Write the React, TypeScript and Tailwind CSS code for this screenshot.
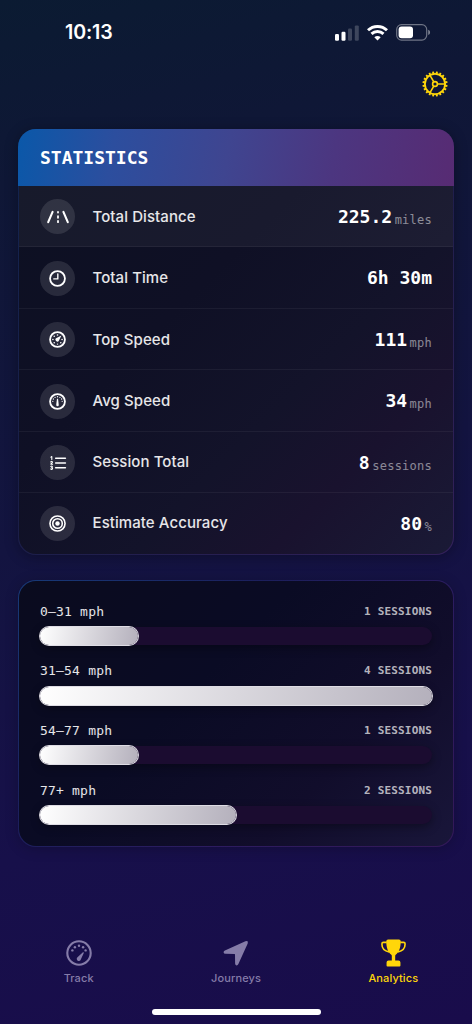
import type { ReactNode } from "react";

const MONO = "font-['DejaVu_Sans_Mono',monospace]";

const GEAR_TEETH = Array.from({ length: 20 }, (_, i) => i * 18);

function GearIcon() {
  return (
    <svg width="26" height="26" viewBox="0 0 26 26" fill="none" stroke="#ffd60a">
      {GEAR_TEETH.map((angle) => (
        <path
          key={angle}
          d="M13 2.8V0.5"
          strokeWidth="1.9"
          transform={`rotate(${angle + 9} 13 13)`}
        />
      ))}
      <circle cx="13" cy="13" r="10.1" strokeWidth="1.8" />
      <circle cx="13" cy="13" r="2.4" strokeWidth="1.6" />
      <path d="M15.4 13H23M11.8 10.9 8 4.4M11.8 15.1 8 21.6" strokeWidth="1.6" />
    </svg>
  );
}

function RoadIcon() {
  return (
    <svg width="24" height="14" viewBox="0 0 24 14" fill="none" stroke="white" strokeLinecap="round">
      <path d="M6.6 1.9 2.2 12.2" strokeWidth="2.1" />
      <path d="M17.4 1.9 21.8 12.2" strokeWidth="2.1" />
      <path d="M12 2v.6M12 6.2v1.6M12 11v1.2" strokeWidth="1.8" />
    </svg>
  );
}

function ClockIcon() {
  return (
    <svg width="17" height="17" viewBox="0 0 16 16" fill="none" stroke="white">
      <circle cx="8" cy="8" r="7" strokeWidth="1.7" />
      <path d="M8.3 3.6v4.8H4.5" strokeWidth="1.3" strokeLinecap="round" strokeLinejoin="round" />
    </svg>
  );
}

function TopSpeedIcon() {
  return (
    <svg width="17" height="17" viewBox="0 0 16 16" fill="white">
      <circle cx="8" cy="8" r="7" fill="none" stroke="white" strokeWidth="1.7" />
      <circle cx="8" cy="3.7" r="0.75" />
      <circle cx="4.9" cy="4.9" r="0.75" />
      <circle cx="3.7" cy="8" r="0.75" />
      <circle cx="4.9" cy="11.1" r="0.75" />
      <circle cx="8" cy="12.3" r="0.65" />
      <circle cx="11.1" cy="11.1" r="0.75" />
      <circle cx="12.3" cy="8" r="0.75" />
      <path d="M11.7 4.3 9.4 8.9A1.7 1.7 0 1 1 7.1 6.6Z" />
    </svg>
  );
}

function AvgSpeedIcon() {
  return (
    <svg width="17" height="17" viewBox="0 0 16 16" fill="white">
      <circle cx="8" cy="8" r="7" fill="none" stroke="white" strokeWidth="1.7" />
      <circle cx="8" cy="3.5" r="0.65" />
      <circle cx="5.7" cy="4.1" r="0.65" />
      <circle cx="4.1" cy="5.7" r="0.65" />
      <circle cx="3.6" cy="7.8" r="0.6" />
      <circle cx="10.3" cy="4.1" r="0.65" />
      <circle cx="11.9" cy="5.7" r="0.65" />
      <circle cx="12.4" cy="7.8" r="0.6" />
      <path d="M7.5 5.4H8.5L9.2 11.3A1.2 1.2 0 1 1 6.8 11.3Z" />
    </svg>
  );
}

function ListIcon() {
  return (
    <svg width="18" height="16" viewBox="0 0 18 16" fill="none" stroke="white" strokeLinecap="round">
      <path d="M6.7 3.3h9.7M6.7 8h9.7M6.7 12.7h9.7" strokeWidth="1.6" />
      <path
        d="M1.9 2.1 2.8 1.5V4.6M1.7 6.9C2 6.2 3.6 6.3 3.4 7.3L1.8 9.2H3.6M1.8 11.4C2.6 10.8 3.6 11.2 3.3 12.1 3.2 12.5 2.8 12.7 2.4 12.7 3.1 12.7 3.6 13 3.5 13.6 3.4 14.5 2.2 14.7 1.7 14"
        strokeWidth="1.1"
        strokeLinejoin="round"
      />
    </svg>
  );
}

function TargetIcon() {
  return (
    <svg width="17" height="17" viewBox="0 0 16 16" fill="none" stroke="white">
      <circle cx="8" cy="8" r="7.1" strokeWidth="1.5" />
      <circle cx="8" cy="8" r="4.5" strokeWidth="1.5" />
      <circle cx="8" cy="8" r="2.1" fill="white" stroke="none" />
    </svg>
  );
}

function TrackIcon() {
  return (
    <svg width="26" height="26" viewBox="0 0 26 26" fill="currentColor">
      <circle cx="13" cy="13" r="11.7" fill="none" stroke="currentColor" strokeWidth="2.1" />
      <circle cx="6.4" cy="10.4" r="1.2" />
      <circle cx="8.9" cy="7.3" r="1.2" />
      <circle cx="13" cy="5.8" r="1.2" />
      <circle cx="17.1" cy="7.3" r="1.2" />
      <circle cx="19.6" cy="10.4" r="1.2" />
      <path d="M17.9 12.8 14.9 19.2A2.1 2.1 0 1 1 11.5 17.2L16.9 12.3Q17.8 11.9 17.9 12.8Z" />
    </svg>
  );
}

function ArrowIcon() {
  return (
    <svg width="26" height="26" viewBox="0 0 26 26" fill="currentColor">
      <path d="M1.9 10.6 22.4 1.2Q25.7 .2 24.7 3.4L15.4 24.1Q14.7 25.5 13.5 25.4 12.1 25.2 12.1 23.6L12 14.4Q12 13.9 11.5 13.9L2.4 13.8Q.8 13.8.6 12.5.5 11.3 1.9 10.6Z" />
    </svg>
  );
}

function TrophyIcon() {
  return (
    <svg width="25" height="28" viewBox="0.4 0 25.2 28" fill="currentColor">
      <path
        d="M6.2 3.3H2.8Q1.3 3.3 1.3 5C1.3 9 3.2 12 8.6 12.9M19.8 3.3H23.2Q24.7 3.3 24.7 5C24.7 9 22.8 12 17.4 12.9"
        fill="none"
        stroke="currentColor"
        strokeWidth="1.6"
      />
      <path d="M7.5 .4H18.5Q20.3 .4 20.3 2.3C20.3 8.5 18.6 13.3 15.2 15.8Q14.7 16.2 14.7 17V21.6H18Q20 21.6 20 23.6V26.6Q20 27.6 19 27.6H7Q6 27.6 6 26.6V23.6Q6 21.6 8 21.6H11.3V17Q11.3 16.2 10.8 15.8C7.4 13.3 5.7 8.5 5.7 2.3Q5.7 .4 7.5 .4Z" />
    </svg>
  );
}

function StatusBar() {
  return (
    <div className="flex h-16 items-center justify-between pt-px pr-[41px] pl-[65px]">
      <span className="text-[19.6px] leading-none font-semibold tracking-[-0.15px]">10:13</span>
      <div className="flex items-center gap-2">
        <svg width="24" height="16" viewBox="0 0 24 16" fill="white">
          <rect x="0" y="9" width="4" height="6.7" rx="1.2" />
          <rect x="6.5" y="6.7" width="4" height="9" rx="1.2" />
          <rect x="13" y="3.6" width="4" height="12.1" rx="1.2" opacity=".2" />
          <rect x="19.8" y="0.4" width="4" height="15.3" rx="1.2" opacity=".2" />
        </svg>
        <svg width="21" height="16" viewBox="0 0 21 16" fill="none" stroke="white" strokeWidth="2.9">
          <path d="M1 5.3C6.3.2 14.7.2 20 5.3M4.5 8.9C7.9 5.7 13.1 5.7 16.5 8.9" />
          <path d="M10.5 15.6 7.3 12.3C9.1 10.6 11.9 10.6 13.7 12.3Z" fill="white" stroke="none" />
        </svg>
        <svg width="35" height="17" viewBox="0 0 35 17" fill="white">
          <rect x=".7" y=".7" width="30" height="15.4" rx="4.8" fill="none" stroke="white" strokeOpacity=".4" strokeWidth="1.2" />
          <rect x="2.6" y="2.6" width="14.4" height="11.6" rx="3" />
          <path d="M32.2 5.8C34.7 6.7 34.7 10.1 32.2 11Z" opacity=".45" />
        </svg>
      </div>
    </div>
  );
}

type Stat = { label: string; value: string; unit?: string; icon: ReactNode };

const stats: Stat[] = [
  { label: "Total Distance", value: "225.2", unit: "miles", icon: <RoadIcon /> },
  { label: "Total Time", value: "6h 30m", icon: <ClockIcon /> },
  { label: "Top Speed", value: "111", unit: "mph", icon: <TopSpeedIcon /> },
  { label: "Avg Speed", value: "34", unit: "mph", icon: <AvgSpeedIcon /> },
  { label: "Session Total", value: "8", unit: "sessions", icon: <ListIcon /> },
  { label: "Estimate Accuracy", value: "80", unit: "%", icon: <TargetIcon /> },
];

const ranges = [
  { label: "0–31 mph", sessions: 1 },
  { label: "31–54 mph", sessions: 4 },
  { label: "54–77 mph", sessions: 1 },
  { label: "77+ mph", sessions: 2 },
];

const maxSessions = Math.max(...ranges.map((r) => r.sessions));

function StatRow({ stat }: { stat: Stat }) {
  return (
    <div className="flex h-[61.4px] items-center border-b border-white/5 px-[21px] pt-[1.6px] first:bg-white/[0.045] last:border-b-0 last:pt-0">
      <div className="flex size-[35px] items-center justify-center rounded-full bg-white/[0.11]">
        {stat.icon}
      </div>
      <span className="ml-[17.5px] flex-1 text-[15px] font-[450] tracking-[0.08px] text-white/90">
        {stat.label}
      </span>
      <div className={`${MONO} flex items-center gap-[2.5px]`}>
        <span className="text-[18px] leading-6 font-bold whitespace-pre">{stat.value}</span>
        {stat.unit && (
          <span className="pt-[6px] text-[12px] leading-4 tracking-[0.25px] text-white/50">
            {stat.unit}
          </span>
        )}
      </div>
    </div>
  );
}

function StatisticsCard() {
  return (
    <section className="h-[426px] overflow-hidden rounded-[18px] bg-[linear-gradient(135deg,#12244f_0%,#1a1e48_45%,#33205a_100%)] shadow-[0_2px_14px_rgba(0,0,0,0.3)]">
      <div className="flex h-[57px] items-center bg-[linear-gradient(100deg,#0a58a9_0%,#2c4e9e_22%,#3f4590_48%,#4c3680_72%,#572b73_100%)] px-[22px]">
        <h1 className={`${MONO} text-[18px] font-bold`}>STATISTICS</h1>
      </div>
      <div className="mx-px h-[368px] overflow-hidden rounded-b-[17px] bg-[linear-gradient(135deg,#0d1022_0%,#0f1025_35%,#13132a_60%,#19122e_77%,#1a1a36_100%)]">
        {stats.map((stat) => (
          <StatRow key={stat.label} stat={stat} />
        ))}
      </div>
    </section>
  );
}

function SpeedRangesCard() {
  return (
    <section
      className={`${MONO} mt-[25px] h-[267px] rounded-[18px] bg-[linear-gradient(135deg,#173a78_0%,#1c1f5c_35%,#2c1c60_65%,#331858_100%)] p-[1.4px] shadow-[0_2px_14px_rgba(0,0,0,0.2)]`}
    >
      <div className="flex h-full flex-col gap-[10.7px] rounded-[17px] bg-[linear-gradient(135deg,#0a0b1e_0%,#0a0b24_40%,#110d2b_72%,#19163a_100%)] px-[20.6px] pt-[19px]">
        {ranges.map((range) => (
          <div key={range.label} className="h-[49px]">
            <div className="flex h-[21px] items-center justify-between pt-px">
              <span className="text-[13px] tracking-[0.2px] text-white/90">{range.label}</span>
              <span className="pt-px text-[11px] font-bold tracking-[0.17px] text-white/70">
                {range.sessions} SESSIONS
              </span>
            </div>
            <div className="mt-[5.6px] h-[18px] rounded-full bg-[#1b0c30] shadow-[0_3px_10px_rgba(0,0,0,0.35)]">
              <div
                className="h-full rounded-full bg-[linear-gradient(100deg,#ffffff,#b4b0bc)] ring-1 ring-[#dedce4]"
                style={{ width: `${(range.sessions / maxSessions) * 100}%` }}
              />
            </div>
          </div>
        ))}
      </div>
    </section>
  );
}

function TabBar() {
  const tabs = [
    { label: "Track", icon: <TrackIcon /> },
    { label: "Journeys", icon: <ArrowIcon /> },
    { label: "Analytics", icon: <TrophyIcon />, active: true },
  ];

  return (
    <nav className="grid grid-cols-3">
      {tabs.map((tab) => (
        <div
          key={tab.label}
          className={`flex flex-col items-center ${tab.active ? "text-[#ffd60a]" : "text-[#857ca8]"}`}
        >
          <div className="flex h-7 items-center">{tab.icon}</div>
          <span className="mt-[3px] text-[11px] leading-4 font-medium tracking-[0.1px]">
            {tab.label}
          </span>
        </div>
      ))}
    </nav>
  );
}

export default function App() {
  return (
    <main className="flex h-[1024px] w-[472px] flex-col overflow-hidden bg-[linear-gradient(165deg,#0b1b32_0%,#0f1736_16%,#131440_48%,#17104a_75%,#190c4b_100%)] font-['Inter',sans-serif] text-white">
      <StatusBar />
      <div className="flex h-[65px] justify-end pt-[6.5px] pr-[24.5px]">
        <GearIcon />
      </div>
      <div className="px-[18px]">
        <StatisticsCard />
        <SpeedRangesCard />
      </div>
      <div className="mt-auto">
        <TabBar />
        <div className="mx-auto mt-[23px] mb-[9px] h-[6px] w-[169px] rounded-full bg-white" />
      </div>
    </main>
  );
}
